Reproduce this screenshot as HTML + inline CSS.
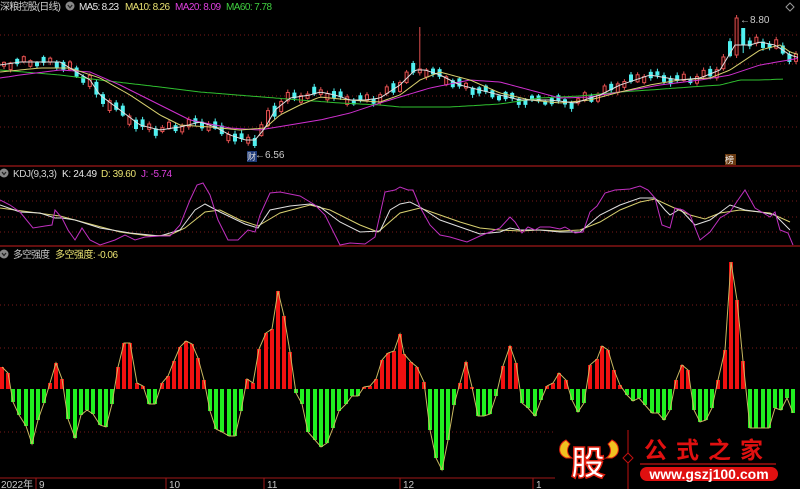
<!DOCTYPE html>
<html><head><meta charset="utf-8">
<style>
html,body{margin:0;padding:0;background:#000;width:800px;height:489px;overflow:hidden}
svg{display:block}
text{font-family:"Liberation Sans","Noto Sans CJK SC",sans-serif}
</style></head>
<body>
<svg id="s" width="800" height="489" viewBox="0 0 800 489" xmlns="http://www.w3.org/2000/svg">
<rect width="800" height="489" fill="#000"/>
<g stroke="#7a1a1a" stroke-dasharray="1,3" stroke-width="1">
<line x1="0" y1="35" x2="800" y2="35"/><line x1="0" y1="64" x2="800" y2="64"/>
<line x1="0" y1="96" x2="800" y2="96"/><line x1="0" y1="127" x2="800" y2="127"/>
<line x1="0" y1="191" x2="800" y2="191"/><line x1="0" y1="201" x2="800" y2="201"/>
<line x1="0" y1="217" x2="800" y2="217"/><line x1="0" y1="232" x2="800" y2="232"/>
<line x1="0" y1="305" x2="800" y2="305"/><line x1="0" y1="348" x2="800" y2="348"/>
<line x1="0" y1="432" x2="555" y2="432"/>
</g>
<line x1="0" y1="166" x2="800" y2="166" stroke="#a01818" stroke-width="1.2"/>
<line x1="0" y1="246" x2="800" y2="246" stroke="#a01818" stroke-width="1.2"/>
<line x1="0" y1="478" x2="555" y2="478" stroke="#a01818" stroke-width="1"/>
<g id="cand"></g>
<g id="ma" fill="none" stroke-width="1"></g>
<g id="kdj" fill="none" stroke-width="1"></g>
<g id="hist"></g>
<g stroke="#a01818"><line x1="36" y1="478" x2="36" y2="489"/><line x1="166" y1="478" x2="166" y2="489"/><line x1="264" y1="478" x2="264" y2="489"/><line x1="400" y1="478" x2="400" y2="489"/><line x1="533" y1="478" x2="533" y2="489"/></g>
<g font-size="10" fill="#c8c8c8">
<text x="1" y="488" textLength="32">2022年</text><text x="39" y="488">9</text><text x="169" y="488">10</text><text x="267" y="488">11</text><text x="403" y="488">12</text><text x="536" y="488">1</text>
</g>
<g font-size="10">
<text x="0" y="10" fill="#d0d0d0" textLength="61">深粮控股(日线)</text>
<circle cx="70" cy="6" r="4.5" fill="#888"/><path d="M67.8 5l2.2 2.7 2.2-2.7" stroke="#222" fill="none" stroke-width="1.2"/>
<text x="79" y="10" fill="#e8e8e8" textLength="40">MA5: 8.23</text>
<text x="125" y="10" fill="#e8e070" textLength="45">MA10: 8.26</text>
<text x="175" y="10" fill="#e040e0" textLength="46">MA20: 8.09</text>
<text x="226" y="10" fill="#40d040" textLength="46">MA60: 7.78</text>
<circle cx="4" cy="173" r="4.5" fill="#888"/><path d="M2 172l2 2.5 2-2.5" stroke="#222" fill="none" stroke-width="1.2"/>
<text x="13" y="177" fill="#d0d0d0" textLength="44">KDJ(9,3,3)</text>
<text x="62" y="177" fill="#e8e8e8" textLength="35">K: 24.49</text>
<text x="101" y="177" fill="#e8e070" textLength="35">D: 39.60</text>
<text x="141" y="177" fill="#e040e0" textLength="31">J: -5.74</text>
<circle cx="4" cy="254" r="4.5" fill="#888"/><path d="M2 253l2 2.5 2-2.5" stroke="#222" fill="none" stroke-width="1.2"/>
<text x="13" y="258" fill="#c8c8c8" textLength="37">多空强度</text>
<text x="55" y="258" fill="#e8e070" textLength="63">多空强度: -0.06</text>
</g>
<path d="M790 3l4 4-4 4-4-4z" fill="none" stroke="#999"/>
<text x="255" y="158" font-size="10" fill="#ccc">←6.56</text>
<rect x="247" y="151" width="10" height="11" fill="#1e3a78"/><text x="247" y="160" font-size="9" fill="#ddd">财</text>
<rect x="725" y="154" width="11" height="11" fill="#6a3a10"/><text x="725" y="163" font-size="9" fill="#eee">榜</text>
<text x="740" y="23" font-size="10" fill="#ccc">←8.80</text>
<path d="M566 440c-8 4-9 14 0 18l6 0c-5-3-6-9-2-14z" fill="#f0c020" stroke="#e02010"/>
<path d="M612 440c8 4 9 14 0 18l-6 0c5-3 6-9 2-14z" fill="#f0c020" stroke="#e02010"/>
<text x="571" y="475" font-size="34" font-weight="bold" fill="#fff" stroke="#e02010" stroke-width="1.5" font-family="'Noto Sans CJK SC',sans-serif">股</text>
<line x1="628" y1="430" x2="628" y2="489" stroke="#c01010"/>
<path d="M628 453l5 5-5 5-5-5z" fill="#000" stroke="#c01010"/>
<text x="644" y="458" font-size="23" font-weight="bold" fill="#e01010" letter-spacing="9" font-family="'Noto Serif CJK SC',serif">公式之家</text>
<line x1="640" y1="464" x2="776" y2="464" stroke="#a01010" stroke-width="1.5"/>
<rect x="640" y="467" width="138" height="14" rx="7" fill="#e01010"/>
<text x="709" y="479" font-size="14" font-weight="bold" fill="#fff" text-anchor="middle">www.gszj100.com</text>
</svg>
<script>
var NS="http://www.w3.org/2000/svg";
function el(p,t,a){var e=document.createElementNS(NS,t);for(var k in a)e.setAttribute(k,a[k]);p.appendChild(e);return e;}
function interp(pts,x){for(var i=0;i<pts.length-1;i++){if(x<=pts[i+1][0]){var a=pts[i],b=pts[i+1];return a[1]+(b[1]-a[1])*(x-a[0])/(b[0]-a[0]);}}return pts[pts.length-1][1];}
function poly(g,pts,c){el(g,"polyline",{points:pts.map(function(p){return p.join(",")}).join(" "),stroke:c});}
var ma5=[[0,65],[20,62],[40,62],[60,62],[70,68],[90,80],[100,95],[120,110],[140,125],[160,130],[180,127],[200,122],[215,127],[230,135],[245,140],[255,140],[265,128],[275,110],[290,98],[310,95],[320,92],[335,95],[350,100],[365,100],[380,98],[400,85],[415,70],[425,70],[440,75],[460,85],[480,90],[500,95],[520,100],[535,100],[550,100],[575,103],[590,98],[600,95],[620,85],[650,75],[680,80],[700,78],[720,70],[735,45],[750,45],[760,42],[775,45],[790,55],[800,58]];
var ma10=[[0,72],[40,68],[70,68],[100,78],[130,95],[160,115],[180,125],[210,127],[240,130],[265,128],[280,115],[300,105],[320,97],[350,100],[380,102],[400,95],[420,80],[440,72],[470,80],[500,93],[530,100],[560,103],[590,100],[620,92],[650,85],[680,80],[710,78],[730,70],[760,50],[780,45],[790,52],[800,55]];
var ma20=[[0,78],[20,75],[60,70],[90,72],[120,85],[160,105],[190,120],[230,128],[260,130],[290,125],[320,120],[350,113],[380,103],[400,97],[430,88],[470,80],[500,82],[530,90],[560,98],[590,97],[620,92],[660,85],[700,80],[730,75],[760,65],[800,58]];
var ma60=[[0,70],[60,75],[100,80],[160,87],[200,92],[250,96],[300,100],[340,103],[380,105],[400,107],[450,107],[500,104],[540,98],[580,96],[620,92],[650,90],[690,87],[720,85],[740,80],[760,80],[785,79]];
var cg=document.getElementById("cand");
for(var i=0;i<121;i++){var x=2+i*6.6;var m=interp(ma5,x+3);var d=interp(ma5,x+6)-interp(ma5,x-3);
 var off=3*Math.sin(i*1.7);var up=(Math.sin(i*2.1)+ (d<0?0.6:-0.6))>0;
 var len=3+3*Math.abs(Math.sin(i*1.3))+Math.abs(d)*0.6;
 var t=m+off-len/2,b=m+off+len/2;
 var hi=t-1-2*Math.abs(Math.sin(i*3.1)),lo=b+1+2*Math.abs(Math.cos(i*2.7));
 if(Math.abs(x-418)<4)hi=27; if(Math.abs(x-732)<4){t=18;b=55;hi=15;lo=58;up=true;}
 if(Math.abs(x-739)<4){t=28;b=45;up=false;}
 var col=up?"#e05050":"#50f0f0";
 el(cg,"line",{x1:x+2,y1:hi,x2:x+2,y2:lo,stroke:col});
 if(up)el(cg,"rect",{x:x+0.5,y:t,width:3,height:b-t,fill:"#200",stroke:col});else el(cg,"rect",{x:x,y:t,width:4,height:b-t,fill:col});}
var mg=document.getElementById("ma");
function sm(p){var r=[];for(var x=0;x<=p[p.length-1][0];x+=3)r.push([x,interp(p,x).toFixed(1)]);return r;}
poly(mg,sm(ma60),"#30c030");poly(mg,sm(ma20),"#d030d0");poly(mg,sm(ma10),"#d8d070");poly(mg,sm(ma5),"#e0e0e0");
var kg=document.getElementById("kdj");
var J=[[0,200],[10,205],[20,212],[33,228],[45,226],[52,225],[55,210],[62,218],[68,230],[75,240],[82,228],[90,240],[100,245],[115,240],[125,235],[135,240],[145,237],[160,236],[170,236],[180,225],[190,200],[197,185],[203,183],[210,195],[218,220],[228,240],[238,240],[248,230],[255,232],[260,215],[270,193],[280,192],[300,196],[315,205],[325,215],[340,245],[350,243],[365,244],[375,237],[385,192],[395,190],[400,187],[408,190],[413,190],[420,207],[430,225],[440,235],[450,237],[460,240],[467,242],[480,236],[490,232],[500,228],[510,217],[515,222],[522,233],[528,227],[535,230],[540,227],[550,227],[560,229],[565,227],[575,233],[583,232],[590,212],[597,206],[605,193],[615,190],[630,189],[640,186],[648,190],[655,198],[662,225],[670,228],[675,208],[683,210],[690,215],[700,240],[710,232],[720,218],[730,212],[738,200],[745,190],[755,208],[765,214],[770,217],[775,212],[780,230],[788,233],[793,245]];
var K=[[0,205],[20,212],[40,213],[55,218],[62,218],[75,220],[100,228],[130,233],[160,236],[180,230],[195,210],[205,204],[220,212],[245,224],[258,228],[270,210],[290,206],[310,204],[320,207],[340,222],[360,232],[380,231],[390,210],[400,204],[410,202],[420,207],[440,220],[460,227],[480,234],[500,232],[510,228],[520,230],[540,230],[560,232],[580,232],[600,215],[620,205],[640,198],[655,198],[665,210],[670,215],[680,209],[695,225],[710,220],[730,205],[745,210],[760,212],[775,215],[790,230]];
var D=[[0,208],[30,212],[60,216],[90,224],[120,232],[150,236],[170,235],[185,228],[205,212],[220,210],[240,220],[258,226],[280,213],[310,205],[330,210],[360,225],[378,232],[400,213],[420,208],[440,215],[460,222],[480,228],[500,230],[520,231],[540,230],[560,231],[580,230],[600,222],[620,210],[640,202],[655,199],[670,206],[690,215],[705,219],[720,213],[740,210],[770,213],[790,222]];
poly(kg,D,"#d8d070");poly(kg,K,"#e0e0e0");poly(kg,J,"#c030c0");
var H=[[2,367],[8,373],[13,402],[19,415],[26,426],[32,444],[38,420],[44,403],[50,383],[56,363],[62,379],[68,419],[75,438],[81,415],[87,410],[93,414],[100,425],[106,427],[112,404],[118,367],[124,343],[130,343],[137,383],[143,386],[149,404],[155,404],[162,383],[168,376],[174,361],[180,347],[186,341],[192,344],[198,358],[204,380],[210,411],[216,429],[222,432],[229,436],[235,436],[241,411],[247,379],[253,383],[259,349],[266,333],[272,329],[278,291],[284,316],[290,352],[296,393],[302,404],[308,432],[315,440],[321,447],[327,443],[333,428],[339,411],[346,404],[352,396],[358,396],[364,387],[370,386],[376,379],[382,360],[388,353],[394,351],[400,334],[404,354],[411,362],[417,367],[424,382],[430,430],[436,458],[442,470],[448,440],[454,405],[460,383],[466,362],[472,387],[478,416],[484,416],[490,414],[496,396],[503,366],[510,346],[516,363],[522,403],[528,408],[535,416],[541,400],[547,386],[553,383],[559,373],[566,380],[572,400],[578,412],[584,403],[590,365],[597,359],[602,346],[608,350],[614,370],[620,385],[627,395],[633,401],[639,398],[645,405],[652,413],[658,413],[664,420],[670,410],[676,380],[682,365],[688,370],[694,410],[700,422],[706,420],[712,408],[718,380],[725,350],[731,262],[737,300],[743,361],[750,428],[756,428],[763,428],[769,428],[775,408],[781,410],[787,398],[793,413]];
var hg=document.getElementById("hist");
H.forEach(function(p){var y=p[1];if(y<389)el(hg,"rect",{x:p[0]-2,y:y,width:4,height:389-y,fill:"#f01010"});else el(hg,"rect",{x:p[0]-2,y:389,width:4,height:Math.max(1,y-389),fill:"#20f020"});});
poly(hg,H,"#c8b860");hg.lastChild.setAttribute("fill","none");
</script>
</body></html>
